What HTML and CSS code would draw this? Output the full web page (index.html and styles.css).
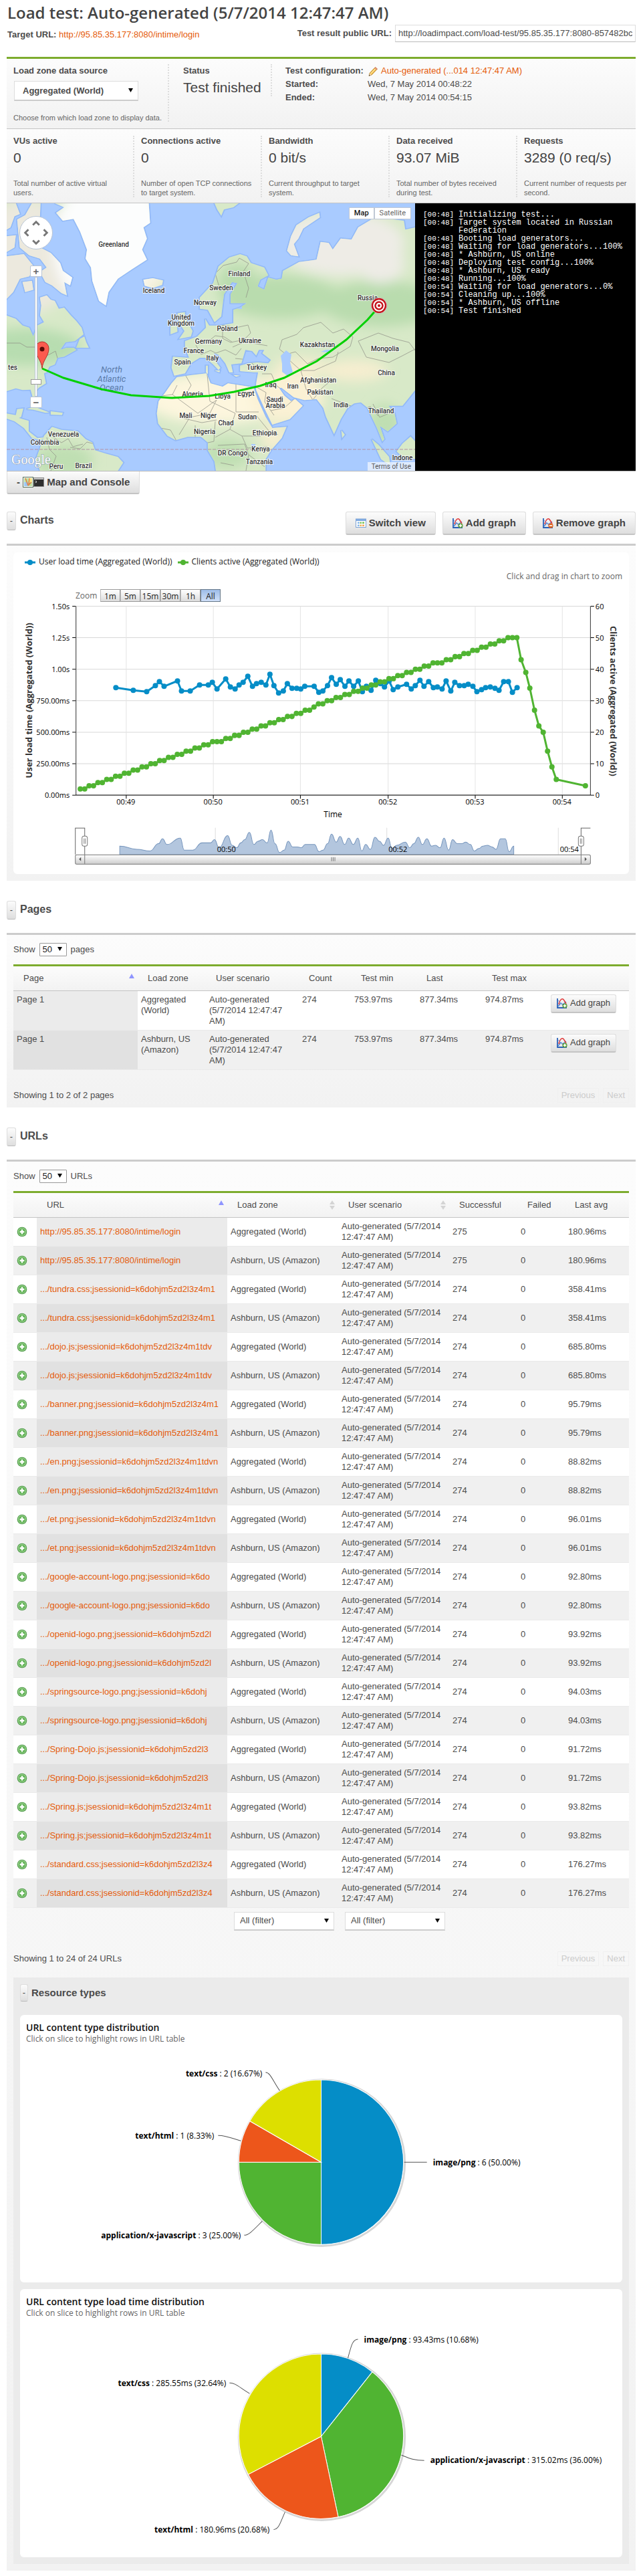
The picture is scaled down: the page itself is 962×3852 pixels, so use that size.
FILE: index.html
```html
<!DOCTYPE html>
<html lang="en">
<head>
<meta charset="utf-8">
<title>Load test: Auto-generated (5/7/2014 12:47:47 AM)</title>
<link rel="stylesheet" href="styles.css">
</head>
<body>
<svg class="defs" aria-hidden="true">
  <symbol id="i-plus" viewBox="0 0 16 16">
    <circle cx="8" cy="8" r="7.3" fill="#4e9a4a"/><circle cx="8" cy="8" r="6.2" fill="#a5d796"/><circle cx="8" cy="8" r="5.2" fill="#5fb254"/>
    <path d="M6.8 4.6h2.4v2.2h2.2v2.4H9.200v2.200H6.800V9.200H4.600V6.800h2.200z" fill="#fff"/>
  </symbol>
  <symbol id="i-graph" viewBox="0 0 16 16">
    <path d="M1 1v14h14" fill="none" stroke="#2a62b8" stroke-width="1.8"/>
    <path d="M2 13 6 8l3 2 5-4" fill="none" stroke="#4a8ad8" stroke-width="1.4"/>
    <path d="M3 10C5 1 9 0 11 4l3 5" fill="none" stroke="#e23b3b" stroke-width="1.6"/>
    <path d="M2 4l5 5 3 4" fill="none" stroke="#7b8fd0" stroke-width="1"/>
  </symbol>
  <symbol id="i-graph-add" viewBox="0 0 16 16">
    <use href="#i-graph"/><circle cx="12" cy="12" r="3.600" fill="#5a9e3a"/><path d="M12 9.800v4.400M9.800 12h4.400" stroke="#fff" stroke-width="1.600"/>
  </symbol>
  <symbol id="i-graph-remove" viewBox="0 0 16 16">
    <use href="#i-graph"/><circle cx="12" cy="12" r="3.600" fill="#e2621b"/><path d="M9.800 12h4.400" stroke="#fff" stroke-width="1.600"/>
  </symbol>
  <symbol id="i-view" viewBox="0 0 16 16">
    <rect x=".5" y="2" width="15" height="12.500" fill="#fff" stroke="#7da3d4"/><rect x=".5" y="2" width="15" height="3" fill="#7fa9e0"/>
    <path d="M3 6.500h2.500v2.500H3zM3 10.500h2.500v2.500H3z" fill="#7fb4ea"/><path d="M6.500 6.500h2.500v2.500H6.500zM10 6.500h3v2.500h-3z" fill="#7cc45c"/><path d="M6.500 10.500h2.500v2.500H6.500z" fill="#f0b04a"/><path d="M10 10.500h3v2.500h-3z" fill="#f5a560"/>
  </symbol>
  <symbol id="i-pencil" viewBox="0 0 16 16">
    <path d="M2 14.500 3 10.500 11.500 1.500 14.500 4 6 13z" fill="#f3b93f" stroke="#a8731a" stroke-width=".8"/><path d="M5 11 12.500 3" stroke="#fde6a0" stroke-width="1.400"/><path d="M2 14.500 3 10.500 6 13z" fill="#f5dfc0"/><path d="M2 14.500l.5-2 1.500 1.300z" fill="#333"/><path d="M11.500 1.500 14.500 4l-1.300 1.400L10.200 2.800z" fill="#e2897a"/>
  </symbol>
  <symbol id="i-map" viewBox="0 0 16 16">
    <rect x=".5" y=".5" width="15" height="15" fill="#fff" stroke="#58705a"/><path d="M2 2h12v12H2z" fill="#bfe0a0"/><path d="M2 8h6v6H2z" fill="#9cc8f0"/><path d="M9 2h5v6H9z" fill="#f7e389"/><path d="M4 2l4 11M8 13l5-5M10 2l-1 9" stroke="#e8743a" stroke-width="1.300" fill="none"/>
  </symbol>
  <symbol id="i-console" viewBox="0 0 16 16">
    <rect x=".5" y="1.500" width="15" height="13" fill="#2e2e2e" stroke="#888"/><path d="M1 2h14v2H1z" fill="#c8c8c8"/><path d="M3 6l2 1.500L3 9" stroke="#fff" fill="none"/>
  </symbol>
</svg>

<main class="page">
  <h1>Load test: Auto-generated (5/7/2014 12:47:47 AM)</h1>
  <div class="urls">
    <p><b>Target URL:</b> <a href="#">http://95.85.35.177:8080/intime/login</a></p>
    <div class="public"><label for="public-url">Test result public URL:</label><input id="public-url" type="text" readonly value="http://loadimpact.com/load-test/95.85.35.177:8080-857482bc"></div>
  </div>

  <section class="panel summary">
    <div class="source">
      <label for="zone">Load zone data source</label>
      <select id="zone" class="field zone"><option>Aggregated (World)</option></select>
      <small>Choose from which load zone to display data.</small>
    </div>
    <div class="status"><b>Status</b><span class="value">Test finished</span></div>
    <dl class="config">
      <dt>Test configuration:</dt><dd><a href="#"><svg class="icon"><use href="#i-pencil"/></svg>Auto-generated (...014 12:47:47 AM)</a></dd>
      <dt>Started:</dt><dd>Wed, 7 May 2014 00:48:22</dd>
      <dt>Ended:</dt><dd>Wed, 7 May 2014 00:54:15</dd>
    </dl>
  </section>
  <section class="panel stats">
    <div class="stat"><b>VUs active</b><span class="value">0</span><small>Total number of active virtual users.</small></div>
    <div class="stat"><b>Connections active</b><span class="value">0</span><small>Number of open TCP connections to target system.</small></div>
    <div class="stat"><b>Bandwidth</b><span class="value">0 bit/s</span><small>Current throughput to target system.</small></div>
    <div class="stat"><b>Data received</b><span class="value">93.07 MiB</span><small>Total number of bytes received during test.</small></div>
    <div class="stat"><b>Requests</b><span class="value">3289 (0 req/s)</span><small>Current number of requests per second.</small></div>
  </section>

  <section class="live">
    <div class="map">
      <svg class="map-art" viewBox="0 0 611 400" preserveAspectRatio="xMidYMid slice" role="img" aria-label="World map">
        <defs>
          <clipPath id="land-clip"><use href="#land"/></clipPath>
          <filter id="soft"><feGaussianBlur stdDeviation="9"/></filter>
          <path id="land" transform="scale(.4018 .3333) translate(-26 -42)" d="
            M26 545 60 560 85 590 110 600 125 640 140 590 165 575 150 545 155 500 150 465 175 455 190 475 205 480 220 515 240 510 265 545 285 570 305 600 312 630 280 660 245 665 225 700 250 690 275 690 285 700 240 730 215 735 205 765 185 775 175 800 165 805 172 850 145 870 132 890 142 920 135 945 122 910 115 878 85 880 60 872 26 885z
            M285 690 298 650 315 640 322 665 332 690 315 690z
            M26 42 60 42 75 90 55 100 40 150 26 160z
            M65 115 95 95 120 42 152 42 150 100 120 150 150 240 190 265 225 310 235 345 270 375 262 410 240 395 250 455 230 445 195 410 170 395 150 350 175 330 150 290 110 275 75 240z
            M26 190 60 185 55 240 26 260z M26 280 90 270 130 330 110 370 75 380 50 440 26 470z M85 395 120 390 125 430 95 440z
            M26 985 60 992 65 965 88 962 80 1000 72 1005 108 1018 108 1065 140 1095 165 1092 155 1105 120 1095 90 1050 55 1020 26 1008z
            M100 965 130 955 185 980 170 982 125 968z M190 975 235 982 232 992 190 990z
            M165 1085 195 1045 230 1058 290 1065 320 1100 345 1115 355 1150 395 1165 440 1180 460 1205 440 1242 150 1242 135 1190 150 1140z
            M660 822 715 812 770 805 785 850 830 865 850 850 895 858 945 868 960 920 990 1000 1015 1050 1068 1045 1050 1095 1010 1150 990 1190 990 1242 805 1242 800 1200 775 1150 775 1115 750 1090 700 1090 655 1105 625 1085 590 1030 585 985 592 930 620 885 640 850z
            M645 730 640 780 650 815 690 805 712 760 745 735 765 735 795 765 815 790 822 780 795 735 800 715 815 722 840 760 855 800 868 800 862 765 900 760 905 740 915 700 940 705 955 725 965 700 985 700 978 715 1010 745 1000 760 960 755 925 760 895 770 895 795 945 800 962 800 955 850 955 880 985 960 1015 1035 1080 1010 1128 950 1100 920 1085 930 1060 905 1040 870 1050 870 1095 912 1135 925 1180 920 1205 960 1215 1000 1245 1078 1270 1010 1295 960 1320 940 1345 935 1370 960 1385 1000 1405 1050 1425 1110 1432 1100 1415 1040 1445 1065 1478 1030 1470 985 1448 950 1500 950 1547 880 1547 150 1510 160 1505 120 1450 112 1390 110 1335 150 1310 205 1270 200 1240 250 1225 220 1195 215 1180 295 1150 300 1115 305 1055 345 1050 380 1030 385 1000 375 985 430 960 415 970 385 1000 365 985 330 935 310 920 280 895 270 855 285 815 325 795 400 745 465 745 515 775 520 800 575 825 550 830 500 835 450 865 395 885 400 860 450 860 490 920 490 895 510 870 520 870 580 820 590 780 590 765 560 768 600 735 640 690 660 690 690 705 735z
            M768 770 775 770 775 808 768 800z M800 792 820 792 818 800z M870 812 895 815 880 820z
            M205 42 240 60 210 85 235 120 275 112 300 170 325 250 320 290 340 330 345 390 370 480 395 500 405 440 440 380 490 340 548 295 530 250 548 200 535 150 560 130 555 42z
            M535 385 570 378 608 388 605 408 570 422 540 412z
            M662 535 690 530 690 550 705 585 718 615 712 640 668 650 688 615 668 580z M636 595 660 590 662 618 636 630z
            M1070 255 1085 190 1105 140 1150 105 1190 85 1192 105 1130 155 1112 200 1095 225 1112 280 1085 275z
            M800 42 890 42 870 60 835 70 825 98 810 70z
            M1272 1060 1285 1080 1275 1095z M1385 1100 1410 1125 1450 1180 1455 1220 1420 1190z
            M1478 1155 1500 1120 1530 1088 1547 1110 1547 1190 1500 1180z M655 550l8-10 5 10z"/>
        </defs>
        <rect width="611" height="400" fill="#a9cbff"/>
        <use href="#land" fill="none" stroke="#92b9f8" stroke-width="9"/>
        <use href="#land" fill="#d8e9c8"/>
        <g clip-path="url(#land-clip)">
          <g filter="url(#soft)">
            <ellipse cx="30" cy="215" rx="80" ry="28" fill="#b7ddb0"/>
            <ellipse cx="410" cy="140" rx="90" ry="32" fill="#b9dcae"/>
            <ellipse cx="560" cy="150" rx="90" ry="34" fill="#b9dcae"/>
            <ellipse cx="345" cy="120" rx="30" ry="30" fill="#b9dcae"/>
            <ellipse cx="500" cy="60" rx="95" ry="48" fill="#eeece6"/>
            <ellipse cx="560" cy="90" rx="35" ry="30" fill="#eeece6"/>
            <ellipse cx="30" cy="80" rx="80" ry="85" fill="#ece9de"/>
            <ellipse cx="315" cy="292" rx="110" ry="38" fill="#fdf6de"/>
            <ellipse cx="420" cy="290" rx="55" ry="38" fill="#fbf1d4"/>
            <ellipse cx="440" cy="245" rx="40" ry="14" fill="#f6eed0"/>
            <ellipse cx="520" cy="250" rx="50" ry="16" fill="#f6eed0"/>
            <ellipse cx="400" cy="350" rx="20" ry="20" fill="#f6eed0"/>
            <ellipse cx="330" cy="375" rx="35" ry="22" fill="#bfdfb2"/>
            <ellipse cx="85" cy="385" rx="45" ry="25" fill="#bfdfb2"/>
            <ellipse cx="565" cy="330" rx="25" ry="30" fill="#bfdfb2"/>
            <ellipse cx="155" cy="60" rx="85" ry="110" fill="#fcfdfd"/>
            <ellipse cx="220" cy="120" rx="20" ry="12" fill="#f5efd8"/>
          </g>
          <g class="borders">
            <path d="M0 209h20l10 6 12 0 12 15 10-4 9-5 4 14M0 350l12 5 9-6M70 350l12 8 10-6 7 12 15-4M60 350l4 18 10 10-8 22M95 365l15 2 10-10 16 4"/>
            <path d="M318 125l-6-20 12-12 20-5 4-6 14 8-8 12 8 25-4 14M300 208l12-10 14 2 12 8M323 182l20 4 18-4 4 12-10 10-20 4-12-6zM283 212l8 14 14-6 8 4 14-5 16 8 8-10M338 215l18-8 34 6M252 234l24 4M342 232l20 2 8 8"/>
            <path d="M408 218l4-14 22-8 10-10 26-8 18 16 16-6 14 12-4 14-26 16-22 2-16 8-18-18-14 4z"/>
            <path d="M526 206l30-12 22 8 24 6 9 12M526 206l12 24 34 8 20-10 19-10M420 232l20 18 20 0 18-8 14-6 4-14M440 250l8 28 10 16M382 255l14 0 8 18 14 10M374 275l14 8-2 14 14 20M458 294l14-18 10-8M486 292l26 10 20 6 12-4 12 14M548 300l10 20 14-6M395 310l20-4 14-12"/>
            <path d="M255 272l-7 14-16 2M248 286l38 28 28-20M268 258l8 14-8 14M300 256l4 40 38 18M343 260v52h34M314 294l-10 20-30 6-16 26M258 320l34 8 22-4M282 332v22M312 326l-2 30-18 4M342 314l-8 24-22 12M334 338l18 10 28 0M352 348l8 18 30-2M316 362l40-2 6 16-4 24M374 318l18 22 14 6M362 376l24 18M225 335l20 4 10 18M320 388l20 4"/>
          </g>
          <path fill="#a9cbff" d="M410 228l8-8 8 6-2 12 4 14-8 6-8-6 0-12zM346 150h6v8h-6zM366 360h6v8h-6zM470 222l8-3 10 0-8 4z"/>
        </g>
        <path d="M0 368h611" stroke="#b493a5" stroke-width="1" stroke-dasharray="5 2"/>
        <g class="places">
          <text x="160" y="65">Greenland</text><text x="220" y="134">Iceland</text><text x="348" y="109">Finland</text><text x="321" y="130">Sweden</text><text x="297" y="152">Norway</text><text x="261" y="174">United</text><text x="261" y="183">Kingdom</text><text x="330" y="191">Poland</text><text x="302" y="210">Germany</text><text x="364" y="209">Ukraine</text><text x="280" y="224">France</text><text x="263" y="241">Spain</text><text x="308" y="235">Italy</text><text x="374" y="249">Turkey</text><text x="465" y="215">Kazakhstan</text><text x="566" y="221">Mongolia</text><text x="540" y="145">Russia</text><text x="568" y="257">China</text><text x="466" y="268">Afghanistan</text><text x="428" y="277">Iran</text><text x="395" y="275">Iraq</text><text x="469" y="286">Pakistan</text><text x="278" y="289">Algeria</text><text x="323" y="292">Libya</text><text x="358" y="288">Egypt</text><text x="401" y="297">Saudi</text><text x="402" y="306">Arabia</text><text x="500" y="305">India</text><text x="560" y="314">Thailand</text><text x="268" y="321">Mali</text><text x="302" y="321">Niger</text><text x="360" y="323">Sudan</text><text x="328" y="332">Chad</text><text x="296" y="345">Nigeria</text><text x="386" y="347">Ethiopia</text><text x="85" y="349">Venezuela</text><text x="57" y="361">Colombia</text><text x="380" y="371">Kenya</text><text x="338" y="377">DR Congo</text><text x="378" y="390">Tanzania</text><text x="115" y="396">Brazil</text><text x="74" y="397">Peru</text><text x="592" y="384">Indone</text><text x="9" y="249">tes</text>
        </g>
        <g class="ocean"><text x="157" y="253">North</text><text x="157" y="267">Atlantic</text><text x="157" y="280">Ocean</text></g>
        <text class="brand" x="7" y="390">Google</text>
        <path d="M53 247 85 261 142 278 186 287 247 291 303 288 340 282 379 273 415 261 464 236 508 204 540 174 554 158" fill="none" stroke="#00d000" stroke-width="3"/>
        <path d="M53 247C52 234 43 229 43 217a10 10 0 0 1 20 0C63 229 54 234 53 247z" fill="#fb5b4f" stroke="#b5322a"/><circle cx="53" cy="218" r="3.500" fill="#5a0c08"/>
        <circle cx="557" cy="153" r="12" fill="#fff" stroke="#999" stroke-width=".5"/><circle cx="557" cy="153" r="10" fill="none" stroke="#c4161c" stroke-width="2.500"/><circle cx="557" cy="153" r="5.500" fill="none" stroke="#c4161c" stroke-width="2.500"/><circle cx="557" cy="153" r="2" fill="#c4161c"/>
      </svg>
      <div class="map-nav">
        <button type="button" class="pan" aria-label="Pan map"><svg viewBox="0 0 50 50"><path d="M20 13l5-5 5 5M20 37l5 5 5-5M13 20l-5 5 5 5M37 20l5 5-5 5" fill="none" stroke="#777" stroke-width="3"/></svg></button>
        <button type="button" class="zoom">+</button>
        <span class="track"><span class="thumb"></span></span>
        <button type="button" class="zoom">−</button>
      </div>
      <div class="map-type"><button type="button" class="on">Map</button><button type="button">Satellite</button></div>
      <a class="terms" href="#">Terms of Use</a>
    </div>
    <ol class="console">
      <li><span>[00:48]</span><span>Initializing test...</span></li>
      <li><span>[00:48]</span><span>Target system located in Russian Federation</span></li>
      <li><span>[00:48]</span><span>Booting load generators...</span></li>
      <li><span>[00:48]</span><span>Waiting for load generators...100%</span></li>
      <li><span>[00:48]</span><span>* Ashburn, US online</span></li>
      <li><span>[00:48]</span><span>Deploying test config...100%</span></li>
      <li><span>[00:48]</span><span>* Ashburn, US ready</span></li>
      <li><span>[00:48]</span><span>Running...100%</span></li>
      <li><span>[00:54]</span><span>Waiting for load generators...0%</span></li>
      <li><span>[00:54]</span><span>Cleaning up...100%</span></li>
      <li><span>[00:54]</span><span>* Ashburn, US offline</span></li>
      <li><span>[00:54]</span><span>Test finished</span></li>
    </ol>
  </section>
  <button type="button" class="btn tab">- <svg class="icon flush"><use href="#i-map"/></svg><svg class="icon"><use href="#i-console"/></svg>Map and Console</button>

  <header class="head first">
    <button type="button" class="fold" aria-label="Collapse charts">-</button><h2>Charts</h2>
    <div class="actions">
      <button type="button" class="btn"><svg class="icon"><use href="#i-view"/></svg>Switch view</button>
      <button type="button" class="btn"><svg class="icon"><use href="#i-graph-add"/></svg>Add graph</button>
      <button type="button" class="btn"><svg class="icon"><use href="#i-graph-remove"/></svg>Remove graph</button>
    </div>
  </header>
  <section class="panel body">
    <div class="card chart">
      <div class="legend">
        <span><svg viewBox="0 0 16 10"><path d="M0 5h16" stroke="#058dc7" stroke-width="3"/><circle cx="8" cy="5" r="4" fill="#058dc7"/></svg>User load time (Aggregated (World))</span>
        <span><svg viewBox="0 0 16 10"><path d="M0 5h16" stroke="#50b432" stroke-width="3"/><circle cx="8" cy="5" r="4" fill="#50b432"/></svg>Clients active (Aggregated (World))</span>
      </div>
      <p class="hint">Click and drag in chart to zoom</p>
      <div class="ranges"><span>Zoom</span><button type="button">1m</button><button type="button">5m</button><button type="button">15m</button><button type="button">30m</button><button type="button">1h</button><button type="button" class="on">All</button></div>
      <svg id="line-chart" class="plot" viewBox="0 74 919 406" role="img" aria-label="User load time and clients active over time"></svg>
    </div>
  </section>

  <header class="head">
    <button type="button" class="fold" aria-label="Collapse pages">-</button><h2>Pages</h2>
  </header>
  <section class="panel body">
    <div class="show"><label for="n-pages">Show</label><select id="n-pages"><option>50</option></select><span>pages</span></div>
    <table class="grid pages">
      <colgroup><col class="c186"><col class="c102"><col class="c139"><col class="c78"><col class="c98"><col class="c98"><col class="c98"><col></colgroup>
      <thead><tr><th class="asc">Page</th><th>Load zone</th><th>User scenario</th><th>Count</th><th>Test min</th><th>Last</th><th>Test max</th><th></th></tr></thead>
      <tbody>
        <tr><td class="key">Page 1</td><td>Aggregated (World)</td><td>Auto-generated (5/7/2014 12:47:47 AM)</td><td>274</td><td>753.97ms</td><td>877.34ms</td><td>974.87ms</td><td><button type="button" class="btn small"><svg class="icon"><use href="#i-graph-add"/></svg>Add graph</button></td></tr>
        <tr><td class="key">Page 1</td><td>Ashburn, US (Amazon)</td><td>Auto-generated (5/7/2014 12:47:47 AM)</td><td>274</td><td>753.97ms</td><td>877.34ms</td><td>974.87ms</td><td><button type="button" class="btn small"><svg class="icon"><use href="#i-graph-add"/></svg>Add graph</button></td></tr>
      </tbody>
    </table>
    <div class="pager after-pages"><span>Showing 1 to 2 of 2 pages</span><button type="button" disabled>Previous</button><button type="button" disabled>Next</button></div>
  </section>

  <header class="head">
    <button type="button" class="fold" aria-label="Collapse URLs">-</button><h2>URLs</h2>
  </header>
  <section class="panel body last">
    <div class="show"><label for="n-urls">Show</label><select id="n-urls"><option>50</option></select><span>URLs</span></div>
    <table class="grid url-table">
      <colgroup><col class="c35"><col class="c285"><col class="c166"><col class="c166"><col class="c102"><col class="c71"><col></colgroup>
      <thead><tr><th></th><th class="asc">URL</th><th class="both">Load zone</th><th class="both">User scenario</th><th>Successful</th><th>Failed</th><th>Last avg</th></tr></thead>
      <tbody id="url-rows"></tbody>
      <tfoot><tr><td></td><td></td><td><select class="field filter" aria-label="Filter by load zone"><option>All (filter)</option></select></td><td><select class="field filter" aria-label="Filter by user scenario"><option>All (filter)</option></select></td><td></td><td></td><td></td></tr></tfoot>
    </table>
    <div class="pager"><span>Showing 1 to 24 of 24 URLs</span><button type="button" disabled>Previous</button><button type="button" disabled>Next</button></div>
    <div class="types">
      <div class="types-head"><button type="button" class="fold" aria-label="Collapse resource types">-</button><h3>Resource types</h3></div>
      <div class="card"><svg id="pie-count" class="plot pie" viewBox="0 0 900 400" role="img" aria-label="URL content type distribution"></svg></div>
      <div class="card"><svg id="pie-time" class="plot pie" viewBox="0 0 900 400" role="img" aria-label="URL content type load time distribution"></svg></div>
    </div>
  </section>
</main>
<script src="app.js"></script>
</body>
</html>
```
FILE: styles.css
```css
* { box-sizing: border-box; }
body { margin: 0; background: #fff; color: #4c4c4c; font: 13px/16px "Liberation Sans", Arial, sans-serif; }
a { color: #e55b0a; text-decoration: none; }
p, h1, h2, h3, dl, dd, ol { margin: 0; padding: 0; }
button, select, input { font: inherit; color: inherit; margin: 0; }
.defs { position: absolute; width: 0; height: 0; }
.page { padding: 0 11px 10px 10px; }
.icon { width: 16px; height: 16px; flex: none; margin-right: 4px; vertical-align: middle; }
.icon.flush { margin-right: 0; }

h1 { padding: 4px 1px 3px; font: 600 24px/30px "Open Sans", sans-serif; color: #444; }
.urls { display: flex; justify-content: space-between; align-items: center; height: 25px; margin-bottom: 23px; }
.urls p { padding: 4px 1px 0; }
.public { display: flex; align-items: center; gap: 5px; font-weight: bold; }
.public input { width: 360px; height: 26px; padding: 0 4px; border: 1px solid #ddd; border-bottom-color: #bbb; font-weight: normal; background: #fff; }

.panel { background: linear-gradient(#fcfcfc, #f2f2f2); }
.summary { display: flex; border-top: 3px solid #7dac2e; border-bottom: 1px solid #c4c4c4; padding: 8px 10px 10px; line-height: 20px; }
.summary label, .summary b, .stat b { display: block; font-weight: bold; }
.source { width: 233px; height: 86px; border-right: 2px dotted #ddd; }
small { display: block; font-size: 11px; line-height: 14px; color: #666; }
.field { appearance: none; background: #fff url("data:image/svg+xml,%3Csvg xmlns='http://www.w3.org/2000/svg' width='8' height='7'%3E%3Cpath d='M0 0h7L3.500 6z'/%3E%3C/svg%3E") no-repeat right 6px center; border: 1px solid #ddd; border-bottom: 2px solid #ccc; border-radius: 0; }
.zone { display: block; width: 186px; height: 30px; margin: 5px 0 18px 1px; padding: 0 12px; font-weight: bold; }
.status { width: 154px; height: 48px; padding-left: 21px; border-right: 2px dotted #ddd; }
.value { display: block; font-size: 21px; line-height: 30px; white-space: nowrap; color: #444; }
.config { display: grid; grid-template-columns: 123px auto; align-content: start; padding-left: 20px; }
.config dt { font-weight: bold; }
.stats { display: grid; grid-template-columns: repeat(4, 191fr) 177fr; height: 111px; padding: 10px 0 9px; border-bottom: 1px solid #c4c4c4; }
.stat { padding: 0 10px; border-right: 2px dotted #ddd; }
.stat:last-child { border-right: 0; padding-right: 8px; }
.stat .value { margin-bottom: 14px; line-height: 34px; }

.live { display: flex; border-bottom: 1px solid #bbb; }
.map { position: relative; flex: 1; min-width: 0; aspect-ratio: 611 / 400; overflow: hidden; }
.map-art { display: block; width: 100%; height: 100%; }
.borders { fill: none; stroke: #8d8d84; stroke-width: 1; opacity: .7; }
.places text { font: 500 10px Roboto, sans-serif; text-anchor: middle; fill: #333; stroke: #fff; stroke-opacity: .8; stroke-width: 2px; paint-order: stroke; }
.ocean text { font: italic 13px Roboto, sans-serif; text-anchor: middle; fill: #5a7aa8; }
.brand { font: 20px "Liberation Serif", serif; fill: #fff; stroke: #8a9ab0; stroke-width: 1px; paint-order: stroke; }
.map-nav { position: absolute; left: 19px; top: 19px; display: flex; flex-direction: column; align-items: center; width: 50px; }
.map-nav button { padding: 0; border: 1px solid #b8c4d4; background: #fff; color: #666; }
.map-nav .pan { width: 50px; height: 50px; border-radius: 50%; }
.pan svg { display: block; width: 48px; height: 48px; }
.map-nav .zoom { width: 18px; height: 17px; border-radius: 2px; font: bold 15px/14px "Liberation Sans", sans-serif; }
.pan + .zoom { margin-top: 24px; }
.track { width: 4px; height: 179px; background: #fff; border: 1px solid #b8c4d4; }
.thumb { display: block; width: 16px; height: 8px; margin: 152px 0 0 -7px; background: #fff; border: 1px solid #999; }
.map-type { position: absolute; right: 6px; top: 6px; display: flex; }
.map-type button { padding: 0 7px; height: 18px; border: 1px solid #c0c8d4; background: #fff; font: 11px/16px Roboto, sans-serif; color: #666; }
.map-type .on { font-weight: 500; color: #111; }
.terms { position: absolute; right: 0; bottom: 0; padding: 0 6px; background: rgba(245, 248, 255, .7); font: 10px/13px Roboto, sans-serif; color: #555; }
.console { flex: 0 0 330px; list-style: none; padding: 11px 10px 0 12px; background: #000; color: #fff; font: 12px/12px "Liberation Mono", monospace; }
.console li { display: flex; }
.console li span:first-child { flex: 0 0 53px; font-size: 11px; }

.btn { display: inline-flex; align-items: center; height: 35px; padding: 0 14px; border: 1px solid #ddd; border-bottom: 2px solid #c4c4c4; border-radius: 3px; background: linear-gradient(#fcfcfc, #dedede); font-size: 15px; font-weight: bold; color: #444; white-space: nowrap; }
.btn.tab { display: flex; height: 34px; border-top: 0; border-radius: 0 0 3px 3px; white-space: pre; }
.btn.small { height: 28px; padding: 0 8px; font-size: 13px; font-weight: normal; }
.head { display: flex; align-items: flex-start; gap: 6px; height: 81px; padding-top: 30px; border-bottom: 3px solid #ccc; }
.head.first { height: 77px; padding-top: 26px; }
.fold { width: 14px; height: 28px; padding: 0; border: 1px solid #ddd; border-bottom-color: #bbb; border-radius: 3px; background: linear-gradient(#fcfcfc, #dedede); }
h2 { font-size: 16px; line-height: 26px; }
.actions { display: flex; gap: 10px; margin-left: auto; }
.body { padding: 10px; }
.card { background: #fff; border-radius: 6px; overflow: hidden; }
.plot { display: block; width: 100%; height: auto; }
.plot text { font: 11px "Open Sans", sans-serif; }
.legend, .hint, .ranges { font: 12px/16px "Open Sans", sans-serif; }
.legend { display: flex; gap: 8px; padding: 6px 17px 0; color: #222; }
.legend svg { width: 16px; height: 10px; margin-right: 5px; vertical-align: middle; }
.hint { margin-top: 6px; padding-right: 10px; text-align: right; color: #666; }
.ranges { display: flex; margin: 11px 0 0 93px; line-height: 19px; color: #666; }
.ranges span { margin-right: 5px; width: 32px; }
.ranges button { width: 30px; height: 19px; padding: 0; border: 1px solid #999; border-left-color: #bbb; background: linear-gradient(#fff, #dcdcdc); color: #222; }
.ranges .on { background: linear-gradient(#9ebde8, #cfdff8); border-color: #678; }

.show { display: flex; align-items: center; gap: 6px; height: 24px; margin-bottom: 10px; }
.show select { appearance: none; width: 41px; height: 20px; padding: 0 4px; border: 1px solid #999; border-radius: 1px; color: #222; background: #fff url("data:image/svg+xml,%3Csvg xmlns='http://www.w3.org/2000/svg' width='8' height='7'%3E%3Cpath d='M0 0h7L3.500 6z'/%3E%3C/svg%3E") no-repeat right 5px center; }
.grid { width: 100%; table-layout: fixed; border-collapse: separate; border-spacing: 0; border-top: 3px solid #7dac2e; }
.c35 { width: 35px; } .c71 { width: 71px; } .c78 { width: 78px; } .c98 { width: 98px; } .c102 { width: 102px; } .c139 { width: 139px; } .c166 { width: 166px; } .c186 { width: 186px; } .c285 { width: 285px; }
.grid th { height: 37px; padding: 0 15px; text-align: left; font-weight: normal; white-space: nowrap; background: linear-gradient(#fcfcfc, #f2f2f2); border-bottom: 1px solid #c4c4c4; }
.grid .asc { background: url("data:image/svg+xml,%3Csvg xmlns='http://www.w3.org/2000/svg' width='9' height='14'%3E%3Cpath d='M0 7L4 0l4 7z' fill='%238f95ff'/%3E%3C/svg%3E") no-repeat right 4px center, linear-gradient(#fcfcfc, #f2f2f2); }
.grid .both { background: url("data:image/svg+xml,%3Csvg xmlns='http://www.w3.org/2000/svg' width='9' height='14'%3E%3Cpath d='M0 6L4 0l4 6zM0 8h8l-4 6z' fill='%23d4d4d4'/%3E%3C/svg%3E") no-repeat right 4px center, linear-gradient(#fcfcfc, #f2f2f2); }
.grid tbody td { padding: 5px; vertical-align: top; background: #fff; border-bottom: 1px solid #eaeaea; }
.grid tbody tr:nth-child(even) td { background: #f0f0f0; }
.grid tbody .key { background: #ebebeb; }
.grid tbody tr:nth-child(even) .key { background: #e1e1e1; }
.url-table tbody td { vertical-align: middle; white-space: nowrap; }
.url-table tbody td.wrap { white-space: normal; }
.expand { display: block; width: 16px; height: 16px; padding: 0; border: 0; background: none; }
.expand svg { display: block; width: 16px; height: 16px; }
.grid tfoot td { padding: 6px 6px 0 10px; }
.filter { display: block; width: 150px; height: 28px; padding: 0 8px; }
.pager { display: flex; align-items: center; gap: 6px; height: 22px; margin-top: 31px; }
.after-pages { margin: 27px 0 -3px; }
.pager span { margin-right: auto; }
.pager button { height: 22px; padding: 0 5px; border: 1px solid #f0f0f0; background: none; color: #ccc; }
.types { margin-top: 17px; padding: 10px; background: #ebebeb; }
.types-head { display: flex; gap: 5px; height: 46px; }
.types-head .fold { width: 12px; height: 26px; }
h3 { font-size: 15px; line-height: 26px; }
.card + .card { margin-top: 10px; }

.plot .axis-title { font-size: 13px; font-weight: bold; fill: #333; }
.plot .axis-name { font-size: 12px; }
.pie text { font-size: 12px; }
.pie .pie-title { font-size: 14px; font-weight: 600; fill: #111; }
.pie .pie-note { font-size: 12px; fill: #666; }
.plot .end { text-anchor: end; }
.plot .mid { text-anchor: middle; }
.plot .name { font-weight: bold; }
```
FILE: app.js
```js
const paths = [
  ['http://95.85.35.177:8080/intime/login', 275, '180.96ms'],
  ['.../tundra.css;jsessionid=k6dohjm5zd2l3z4m1', 274, '358.41ms'],
  ['.../dojo.js;jsessionid=k6dohjm5zd2l3z4m1tdv', 274, '685.80ms'],
  ['.../banner.png;jsessionid=k6dohjm5zd2l3z4m1', 274, '95.79ms'],
  ['.../en.png;jsessionid=k6dohjm5zd2l3z4m1tdvn', 274, '88.82ms'],
  ['.../et.png;jsessionid=k6dohjm5zd2l3z4m1tdvn', 274, '96.01ms'],
  ['.../google-account-logo.png;jsessionid=k6do', 274, '92.80ms'],
  ['.../openid-logo.png;jsessionid=k6dohjm5zd2l', 274, '93.92ms'],
  ['.../springsource-logo.png;jsessionid=k6dohj', 274, '94.03ms'],
  ['.../Spring-Dojo.js;jsessionid=k6dohjm5zd2l3', 274, '91.72ms'],
  ['.../Spring.js;jsessionid=k6dohjm5zd2l3z4m1t', 274, '93.82ms'],
  ['.../standard.css;jsessionid=k6dohjm5zd2l3z4', 274, '176.27ms']
];
document.getElementById('url-rows').innerHTML = paths.flatMap(([url, ok, avg]) =>
  ['Aggregated (World)', 'Ashburn, US (Amazon)'].map(zone =>
    `<tr><td><button type="button" class="expand" aria-label="Expand row"><svg><use href="#i-plus"/></svg></button></td>` +
    `<td class="key"><a href="#">${url}</a></td><td>${zone}</td><td class="wrap">Auto-generated (5/7/2014 12:47:47 AM)</td>` +
    `<td>${ok}</td><td>0</td><td>${avg}</td></tr>`)).join('');

/* Line chart: plot area spans x 93..862 and y 80.5..362.5. */
const left = 93, right = 862, top0 = 80.5, base = 362.5;
const text = (x, y, s, cls = '') => `<text x="${x}" y="${y}" class="${cls}">${s}</text>`;
const line = (x1, y1, x2, y2, c, w = 1) => `<path d="M${x1} ${y1}L${x2} ${y2}" stroke="${c}" stroke-width="${w}"/>`;
let out = '';
['1.50s', '1.25s', '1.00s', '750.00ms', '500.00ms', '250.00ms', '0.00ms'].forEach((s, i) => {
  const y = top0 + 47 * i;
  out += line(left, y, right, y, '#d8d8d8') + line(left - 5, y, left, y, '#000') + line(right, y, right + 5, y, '#000');
  out += text(84, y + 4, s, 'end') + text(869, y + 4, 60 - 10 * i);
});
['00:49', '00:50', '00:51', '00:52', '00:53', '00:54'].forEach((s, i) => {
  const x = 168 + Math.round(130.2 * i);
  out += line(x + .5, top0, x + .5, base, '#e4e4e4') + line(x + .5, base, x + .5, base + 5, '#000') + text(x, 376, s, 'mid');
});
out += line(left + .5, top0, left + .5, base, '#333') + line(right - .5, top0, right - .5, base, '#333') + line(left, base, right, base, '#000');
out += text(477, 395, 'Time', 'mid axis-name');
out += '<text class="axis-title mid" transform="translate(28 221) rotate(-90)">User load time (Aggregated (World))</text>';
out += '<text class="axis-title mid" transform="translate(891 222) rotate(90)">Clients active (Aggregated (World))</text>';

const load = [[153,202],[179,206],[199,208],[212,199],[218,193],[225,200],[245,192],[251,207],[264,207],[278,198],[291,198],[297,194],[304,204],[317,189],[324,201],[331,204],[337,198],[343,194],[350,185],[357,200],[363,196],[370,194],[377,198],[383,182],[389,199],[396,210],[403,207],[409,196],[416,203],[423,203],[429,204],[435,200],[449,200],[456,209],[462,207],[469,199],[475,187],[482,197],[488,190],[495,200],[501,192],[508,200],[515,192],[521,208],[527,200],[534,206],[541,191],[548,196],[554,201],[561,192],[567,205],[574,201],[587,197],[594,204],[600,199],[607,191],[613,200],[620,193],[627,202],[633,201],[640,204],[646,192],[653,207],[659,194],[666,199],[673,199],[679,197],[686,200],[692,208],[699,205],[705,202],[712,201],[719,203],[725,206],[732,193],[739,193],[745,209],[752,202]];
const clients = [];
for (let v = 2; v <= 50; v++) {
  const n = v === 28 ? 1 : [17, 42, 50].includes(v) ? 3 : 2;
  for (let k = 0; k < n; k++) clients.push([99.9 + clients.length * 6.583, base - v * 4.7]);
}
[[758, 43], [765, 39], [771, 34], [778, 27], [784.5, 22], [791, 20], [797.500, 14], [804, 9], [810.500, 5], [854, 3]].forEach(([x, v]) => clients.push([x, base - v * 4.7]));
const series = (pts, c) => `<polyline points="${pts.join(' ')}" fill="none" stroke="${c}" stroke-width="3" stroke-linejoin="round"/>` +
  pts.map(p => `<circle cx="${p[0]}" cy="${p[1]}" r="4" fill="${c}"/>`).join('');
out += series(load, '#058dc7') + series(clients, '#50b432');

/* Navigator strip and scrollbar under the plot. */
const nav = load.map(([x, y]) => [158.800 + (x - 153) * .982, 448 - (210 - y) * 1.200]);
let d = `M${nav[0][0]} 451L${nav[0]}`;
for (let i = 1; i < nav.length; i++) {
  const m = (nav[i - 1][0] + nav[i][0]) / 2;
  d += `C${m} ${nav[i - 1][1]} ${m} ${nav[i][1]} ${nav[i]}`;
}
[301.5, 557.5, 813.5].forEach(x => out += line(x, 411, x, 451, '#ddd'));
out += `<path d="${d}V451z" fill="#b3c6de" stroke="#7796bd" stroke-width="1"/>`;
out += text(304, 447, '00:50') + text(560, 447, '00:52') + text(816, 447, '00:54');
out += `<defs><linearGradient id="bar" x2="0" y2="1"><stop stop-color="#fff"/><stop offset="1" stop-color="#ccc"/></linearGradient></defs>
<rect x="92.5" y="451.500" width="769" height="14" rx="2" fill="url(#bar)" stroke="#777"/>
<path d="M106.500 451v14M847.500 451v14M475 455v6M477.500 455v6M480 455v6" stroke="#777"/>
<path d="M101 455v6l-3-3zM853 455v6l3-3z" fill="#555"/>
<path d="M92.500 451V411.500H106.500V451M861.500 411.500H847.500V451" fill="none" stroke="#666"/>
<rect x="102.500" y="423.500" width="8" height="15" rx="3" fill="#fff" stroke="#777"/><rect x="843.500" y="423.500" width="8" height="15" rx="3" fill="#fff" stroke="#777"/>
<path d="M105.500 427v8M107.500 427v8M846.500 427v8M848.500 427v8" stroke="#888"/>`;
document.getElementById('line-chart').innerHTML = out;

function pie(id, title, slices) {
  const cx = 450, cy = 220, r = 123;
  const at = t => [cx + r * Math.sin(t * 2 * Math.PI), cy - r * Math.cos(t * 2 * Math.PI)];
  let s = text(9, 24, title, 'pie-title') + text(9, 40, 'Click on slice to highlight rows in URL table', 'pie-note');
  s += `<circle cx="${cx + 1}" cy="${cy + 1}" r="${r + 1}" fill="none" stroke="#bbb" stroke-width="3" opacity=".6"/>`;
  let t = 0;
  slices.forEach(([name, value, pct, color, x, y, cls, link]) => {
    const a = at(t), b = at(t + pct / 100);
    t += pct / 100;
    s += `<path d="M${cx} ${cy}L${a}A${r} ${r} 0 0 1 ${b}z" fill="${color}" stroke="#fff" stroke-width="1"/>`;
    s += `<path d="${link}" fill="none" stroke="#555"/>`;
    s += `<text x="${x}" y="${y}" class="${cls}"><tspan class="name">${name}</tspan> : ${value} (${pct.toFixed(2)}%)</text>`;
  });
  document.getElementById(id).innerHTML = s;
}
pie('pie-count', 'URL content type distribution', [
  ['image/png', '6', 50, '#058dc7', 617, 225, '', 'M574 220H608'],
  ['application/x-javascript', '3', 25, '#50b432', 330, 334, 'end', 'M335 329C342 329 348 322 362 308'],
  ['text/html', '1', 8.33, '#ed561b', 290, 185, 'end', 'M296 180C304 180 310 182 330 188'],
  ['text/css', '2', 16.67, '#dddf00', 362, 92, 'end', 'M367 86C374 86 377 97 388 113']
]);
pie('pie-time', 'URL content type load time distribution', [
  ['image/png', '93.43ms', 10.68, '#058dc7', 514, 80, '', 'M505 75C497 75 495 84 490 103'],
  ['application/x-javascript', '315.02ms', 36, '#50b432', 613, 260, '', 'M570 248C580 252 588 256 604 256'],
  ['text/html', '180.96ms', 20.68, '#ed561b', 373, 364, 'end', 'M379 359C387 359 389 348 396 333'],
  ['text/css', '285.55ms', 32.64, '#dddf00', 308, 145, 'end', 'M313 140C322 140 328 147 343 156']
]);
```
